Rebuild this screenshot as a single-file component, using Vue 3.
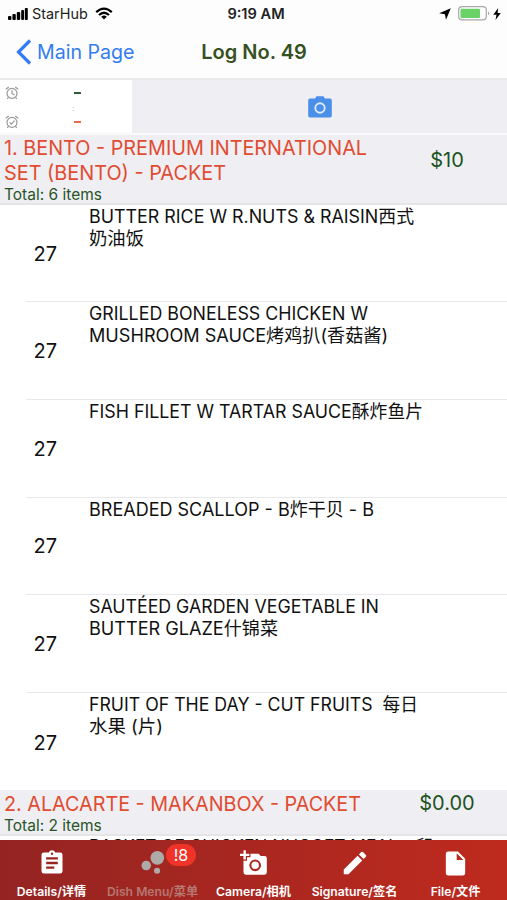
<script setup>
import { ref } from 'vue'

const dishes = [
  { qty: 27, lines: ['BUTTER RICE W R.NUTS & RAISIN西式', '奶油饭'], widths: [325, 55] },
  { qty: 27, lines: ['GRILLED BONELESS CHICKEN W', 'MUSHROOM SAUCE烤鸡扒(香菇酱)'], widths: [279, 299] },
  { qty: 27, lines: ['FISH FILLET W TARTAR SAUCE酥炸鱼片'], widths: [334] },
  { qty: 27, lines: ['BREADED SCALLOP - B炸干贝 - B'], widths: [285] },
  { qty: 27, lines: ['SAUTÉED GARDEN VEGETABLE IN', 'BUTTER GLAZE什锦菜'], widths: [290, 189] },
  { qty: 27, lines: ['FRUIT OF THE DAY - CUT FRUITS\u00a0 每日', '水果 (片)'], widths: [329, 74] },
]

const tabs = [
  { id: 'details', label: 'Details/详情' },
  { id: 'menu', label: 'Dish Menu/菜单', badge: '!8' },
  { id: 'camera', label: 'Camera/相机' },
  { id: 'signature', label: 'Signature/签名' },
  { id: 'file', label: 'File/文件' },
]

const current = ref('menu')
</script>

<template>
  <div class="screen">
    <div class="status">
      <div class="carrier">
        <svg width="20" height="12" viewBox="0 0 20 12">
          <rect x="0" y="8" width="3.4" height="4" rx="1" />
          <rect x="4.4" y="6" width="3.4" height="6" rx="1" />
          <rect x="8.8" y="4" width="3.4" height="8" rx="1" />
          <rect x="13.2" y="2" width="2.8" height="10" rx="1" />
          <rect x="16.8" y="0" width="3" height="12" rx="1" />
        </svg>
        <span>StarHub</span>
        <svg class="wifi" width="18" height="13" viewBox="0 0 18 13">
          <path d="M1.2 5.1Q9 -2 16.8 5.1M4 8Q9 3.5 14 8" fill="none" stroke="#000" stroke-width="2.2" />
          <path d="M6.2 9.8Q9 7.4 11.8 9.8L9 12.6z" />
        </svg>
      </div>
      <b class="clock">9:19 AM</b>
      <div class="power">
        <svg width="12" height="12" viewBox="0 0 12 12"><path d="M11.8.3L7 11.8L5.9 6.3L.2 5.2z" /></svg>
        <svg class="battery" width="32" height="15" viewBox="0 0 32 15">
          <rect x=".7" y=".7" width="27.6" height="13.2" rx="3.4" fill="none" stroke="#a8a8a8" stroke-width="1.2" />
          <rect x="2.5" y="2.7" width="19.5" height="9.2" rx="1.2" fill="#69d368" />
          <path d="M30 5.2q2.3 2.1 0 4.2z" fill="#a8a8a8" />
        </svg>
        <svg width="8" height="12" viewBox="0 0 8 12"><path d="M5.2 0L.3 6.8H3.5L2.5 12L7.8 4.9H4.6z" /></svg>
      </div>
    </div>

    <header class="nav">
      <a class="back">
        <svg width="16" height="26" viewBox="0 0 16 26"><path d="M14 1.5L2.5 13L14 24.5" fill="none" stroke="#347cf1" stroke-width="3.2" /></svg>
        <span>Main Page</span>
      </a>
      <h1>Log No. 49</h1>
    </header>

    <div class="summary">
      <div class="times">
        <div class="time">
          <svg width="14" height="14" viewBox="0 0 14 14"><g fill="none" stroke="#999" stroke-width="1.2"><circle cx="7" cy="7.4" r="5" /><path d="M7 4.2V7.5L9.4 9M.8 3.3L3.8 1M10.2 1L13.2 3.3M3.5 11.3L2.2 13M10.5 11.3L11.8 13" /></g></svg>
          <i class="start"></i>
        </div>
        <span class="colon">:</span>
        <div class="time">
          <svg width="14" height="14" viewBox="0 0 14 14"><g fill="none" stroke="#999" stroke-width="1.2"><circle cx="7" cy="7.4" r="5" /><path d="M4.6 7.4L6.4 9.1L9.6 5.6M.8 3.3L3.8 1M10.2 1L13.2 3.3M3.5 11.3L2.2 13M10.5 11.3L11.8 13" /></g></svg>
          <i class="end"></i>
        </div>
      </div>
      <div class="photo">
        <svg width="24" height="22" viewBox="0 0 24 22">
          <path d="M2 2.6H7L8.5.2H15.5L17 2.6H22Q23.8 2.6 23.8 4.4V19.8Q23.8 21.6 22 21.6H2Q.2 21.6 .2 19.8V4.4Q.2 2.6 2 2.6z" fill="#4a90e8" />
          <circle cx="12" cy="12" r="4.7" fill="none" stroke="#dce9fa" stroke-width="1.9" />
        </svg>
      </div>
    </div>

    <section class="group first">
      <div class="group-name">
        <svg class="txt" width="380" height="50">
          <text x="0" y="20" textLength="363" lengthAdjust="spacingAndGlyphs">1. BENTO - PREMIUM INTERNATIONAL</text>
          <text x="0" y="44.5" textLength="222" lengthAdjust="spacingAndGlyphs">SET (BENTO) - PACKET</text>
        </svg>
        <p>Total: 6 items</p>
      </div>
      <div class="price">$10</div>
    </section>

    <ul class="dishes">
      <li v-for="(dish, i) in dishes" :key="i">
        <span class="qty">{{ dish.qty }}</span>
        <svg class="dish-name" width="360" height="48">
          <text v-for="(line, n) in dish.lines" :key="line" x="0" :y="17.6 + n * 22" :textLength="dish.widths[n]" lengthAdjust="spacingAndGlyphs">{{ line }}</text>
        </svg>
      </li>
    </ul>

    <section class="group second">
      <div class="group-name">
        <svg class="txt" width="380" height="26">
          <text x="0" y="21" textLength="357" lengthAdjust="spacingAndGlyphs">2. ALACARTE - MAKANBOX - PACKET</text>
        </svg>
        <p>Total: 2 items</p>
      </div>
      <div class="price">$0.00</div>
    </section>

    <div class="peek">
      <svg class="dish-name" width="360" height="24">
        <text x="0" y="16.7" textLength="344" lengthAdjust="spacingAndGlyphs">BASKET OF CHICKEN NUGGET MEAL - 印</text>
      </svg>
    </div>

    <nav class="tabs">
      <button v-for="tab in tabs" :key="tab.id" :class="{ active: current === tab.id }" @click="current = tab.id">
        <span class="icon">
          <svg v-if="tab.id === 'details'" width="28" height="28" viewBox="0 0 24 24"><path fill-rule="evenodd" d="M19 3h-4.2a3 3 0 0 0-5.6 0H5a2 2 0 0 0-2 2v14a2 2 0 0 0 2 2h14a2 2 0 0 0 2-2V5a2 2 0 0 0-2-2zm-7 0a1 1 0 1 1 0 2a1 1 0 0 1 0-2zm2 14H7v-2h7zm3-4H7v-2h10zm0-4H7V7h10z" /></svg>
          <svg v-else-if="tab.id === 'menu'" width="28" height="28" viewBox="0 0 24 24"><circle cx="6.2" cy="14.2" r="4.1" /><circle cx="15.7" cy="7.6" r="5.9" /><circle cx="15.5" cy="18.7" r="2.6" /></svg>
          <svg v-else-if="tab.id === 'camera'" width="28" height="28" viewBox="0 0 24 24"><path fill-rule="evenodd" d="M3 4V1h2v3h3v2H5v3H3V6H0V4zm3 6V7h3V4h7l1.8 2H21a2 2 0 0 1 2 2v12a2 2 0 0 1-2 2H5a2 2 0 0 1-2-2V10zm7 9a5 5 0 1 0 0-10a5 5 0 0 0 0 10zm0-1.8a3.2 3.2 0 1 1 0-6.4a3.2 3.2 0 0 1 0 6.4z" /></svg>
          <svg v-else-if="tab.id === 'signature'" width="30" height="30" viewBox="0 0 24 24"><path d="M3 17.25V21h3.75L17.81 9.94l-3.75-3.75zM20.71 7.04a1 1 0 0 0 0-1.41l-2.34-2.34a1 1 0 0 0-1.41 0l-1.83 1.83l3.75 3.75z" /></svg>
          <svg v-else width="29" height="29" viewBox="0 0 24 24"><path d="M6 2a2 2 0 0 0-2 2v16a2 2 0 0 0 2 2h12a2 2 0 0 0 2-2V8l-6-6zm7 7V3.5L18.5 9z" /></svg>
        </span>
        <span v-if="tab.badge" class="badge">{{ tab.badge }}</span>
        <span class="label">{{ tab.label }}</span>
      </button>
    </nav>
  </div>
</template>

<style>
body {
  margin: 0;
}
</style>

<style scoped>
.screen {
  width: 507px;
  height: 900px;
  overflow: hidden;
  display: flex;
  flex-direction: column;
  background-color: #fff;
  color: #111;
  font-family: Inter, 'Noto Sans CJK SC', sans-serif;
}

.screen > * {
  flex-shrink: 0;
  box-sizing: border-box;
}

svg {
  display: block;
}

.status {
  height: 27px;
  padding: 0 6px 0 8px;
  display: grid;
  grid-template-columns: 1fr auto 1fr;
  align-items: center;
  background-color: #fdfdfd;
  color: #222;
}

.carrier,
.power {
  display: flex;
  align-items: center;
}

.carrier {
  font-size: 14.4px;
  gap: 4px;
}

.wifi {
  margin-left: 3px;
}

.clock {
  font-size: 14.6px;
  font-weight: 600;
  padding-left: 3px;
}

.power {
  justify-content: flex-end;
}

.battery {
  margin: 0 3px 0 7px;
}

.nav {
  height: 53px;
  padding: 0 15px 1px 16px;
  display: grid;
  grid-template-columns: 1fr auto 1fr;
  align-items: center;
  background-color: #fdfdfd;
  border-bottom: 2px solid #e9e9eb;
}

.back {
  display: flex;
  align-items: center;
  gap: 5px;
  color: #347cf1;
  font-size: 19.6px;
}

.nav h1 {
  margin: 0;
  font-size: 20px;
  font-weight: 600;
  color: #36511f;
}

.summary {
  height: 55px;
  display: flex;
  background-color: #efeff3;
  border-bottom: 2px solid #f9f9fa;
}

.times {
  width: 132px;
  background-color: #fff;
  padding: 6px 5px 4px;
  box-sizing: border-box;
  display: flex;
  flex-direction: column;
  justify-content: space-between;
}

.time {
  display: flex;
  align-items: center;
}

.time i {
  width: 7px;
  height: 2px;
  margin-left: 55px;
}

.start {
  background-color: #315d39;
}

.end {
  background-color: #ee6652;
}

.colon {
  padding-left: 67px;
  font-size: 8px;
  line-height: 10px;
  color: #bbb;
}

.photo {
  flex: 1;
  display: flex;
  align-items: center;
  justify-content: center;
}

.group {
  display: flex;
  background-color: #efeff3;
  border-bottom: 2px solid #e5e5e8;
}

.group-name {
  width: 388px;
  padding-left: 4px;
  box-sizing: border-box;
}

.group-name p {
  margin: 0;
  font-size: 15.5px;
  line-height: 19px;
  color: #285428;
}

.txt {
  font-size: 20.5px;
  fill: #e04c32;
}

.price {
  width: 118px;
  text-align: center;
  font-size: 20px;
  line-height: 27px;
  color: #20521e;
}

.first {
  height: 70px;
}

.first .price {
  padding-top: 12px;
}

.second {
  height: 46px;
}

.dishes {
  list-style: none;
  height: 585px;
  margin: 0;
  padding: 0;
}

.dishes li {
  height: 97.8px;
  margin-left: 26px;
  box-sizing: border-box;
  border-bottom: 1px solid #e8e8ea;
  display: flex;
}

.dishes li:first-child {
  height: 97px;
}

.dishes li:last-child {
  border-bottom: 0;
}

.qty {
  width: 63px;
  padding: 1px 0 0 7.5px;
  box-sizing: border-box;
  align-self: center;
  font-size: 20px;
}

.dish-name {
  font-size: 18px;
  fill: #111;
}

.peek {
  height: 4px;
  padding-left: 89px;
  overflow: hidden;
}

.tabs {
  height: 60px;
  display: flex;
  padding: 0 0 0 1px;
  background: linear-gradient(90deg, #942422, #bf2a1e);
}

.tabs button {
  position: relative;
  width: 101px;
  padding: 8px 0 0;
  border: 0;
  background: none;
  display: flex;
  flex-direction: column;
  align-items: center;
  font-family: inherit;
  color: #fff;
  fill: #fff;
}

.tabs .active {
  color: #b67771;
  fill: #adaaa8;
}

.icon {
  height: 30px;
  display: flex;
  align-items: center;
}

.label {
  font-size: 12.2px;
  font-weight: 600;
  line-height: 14px;
  margin-top: 7px;
  white-space: nowrap;
}

.badge {
  position: absolute;
  left: 64px;
  top: 4px;
  width: 30px;
  height: 22px;
  border-radius: 11px;
  background-color: #ef3329;
  color: #fff;
  font-size: 16px;
  line-height: 22px;
  text-align: center;
}
</style>
